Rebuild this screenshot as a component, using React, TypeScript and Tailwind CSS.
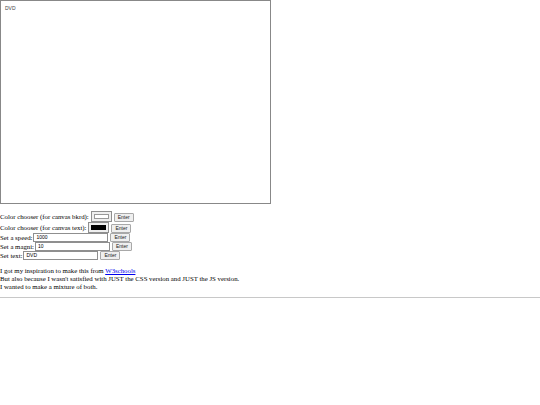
import React from 'react';

function EnterButton() {
  return (
    <button className="ml-[2px] h-[9px] w-[20px] border border-[#a8a8a8] bg-[#efefef] rounded-[1px] text-[5px] leading-none font-['Liberation_Sans',sans-serif] text-[#222] flex items-center justify-center">
      Enter
    </button>
  );
}

function TextBox({ value, width }: { value: string; width: string }) {
  return (
    <div className={`${width} h-[9px] border border-[#8f8f8f] bg-white px-[2px] text-[5px] leading-[7px] font-['Liberation_Sans',sans-serif] text-black`}>
      {value}
    </div>
  );
}

export default function App() {
  return (
    <div className="w-[540px] h-[405px] bg-white text-black font-['Liberation_Serif',serif] text-[6.8px] leading-[8px]">
      {/* Canvas */}
      <div className="w-[271px] h-[204px] border border-[#888888] px-[4px] py-[3px]">
        <span className="text-[5px] leading-[6px] font-['Liberation_Sans',sans-serif] text-[#444]">DVD</span>
      </div>

      {/* Controls */}
      <div className="mt-[6px] flex flex-col">
        <div className="flex items-end h-[12px]">
          <span className="mb-[1px] mr-[1px]">Color chooser (for canvas bkrd):</span>
          <div className="ml-[1px] w-[21px] h-[11px] border border-[#8f8f8f] bg-[#efefef] p-[2px]">
            <div className="w-full h-full bg-white border border-[#999]" />
          </div>
          <EnterButton />
        </div>
        <div className="flex items-end h-[11px]">
          <span className="mb-[1px] mr-[1px]">Color chooser (for canvas text):</span>
          <div className="ml-[1px] w-[21px] h-[11px] border border-[#8f8f8f] bg-[#efefef] p-[2px]">
            <div className="w-full h-full bg-black" />
          </div>
          <EnterButton />
        </div>
        <div className="flex items-end h-[9px]">
          <span className="mr-[1px]">Set a speed:</span>
          <TextBox value="1000" width="w-[75px]" />
          <EnterButton />
        </div>
        <div className="flex items-end h-[9px]">
          <span className="mr-[1px]">Set a magni:</span>
          <TextBox value="10" width="w-[75px]" />
          <EnterButton />
        </div>
        <div className="flex items-end h-[9px]">
          <span className="mr-[1px]">Set text:</span>
          <TextBox value="DVD" width="w-[75px]" />
          <EnterButton />
        </div>
      </div>

      {/* About */}
      <div className="mt-[7px]">
        <p>
          I got my inspiration to make this from{' '}
          <a className="text-[#0000ee] underline" href="#">W3schools</a>
        </p>
        <p>But also because I wasn't satisfied with JUST the CSS version and JUST the JS version.</p>
        <p>I wanted to make a mixture of both.</p>
      </div>
      <hr className="mt-[6px] border-t border-[#c8c8c8]" />
    </div>
  );
}
